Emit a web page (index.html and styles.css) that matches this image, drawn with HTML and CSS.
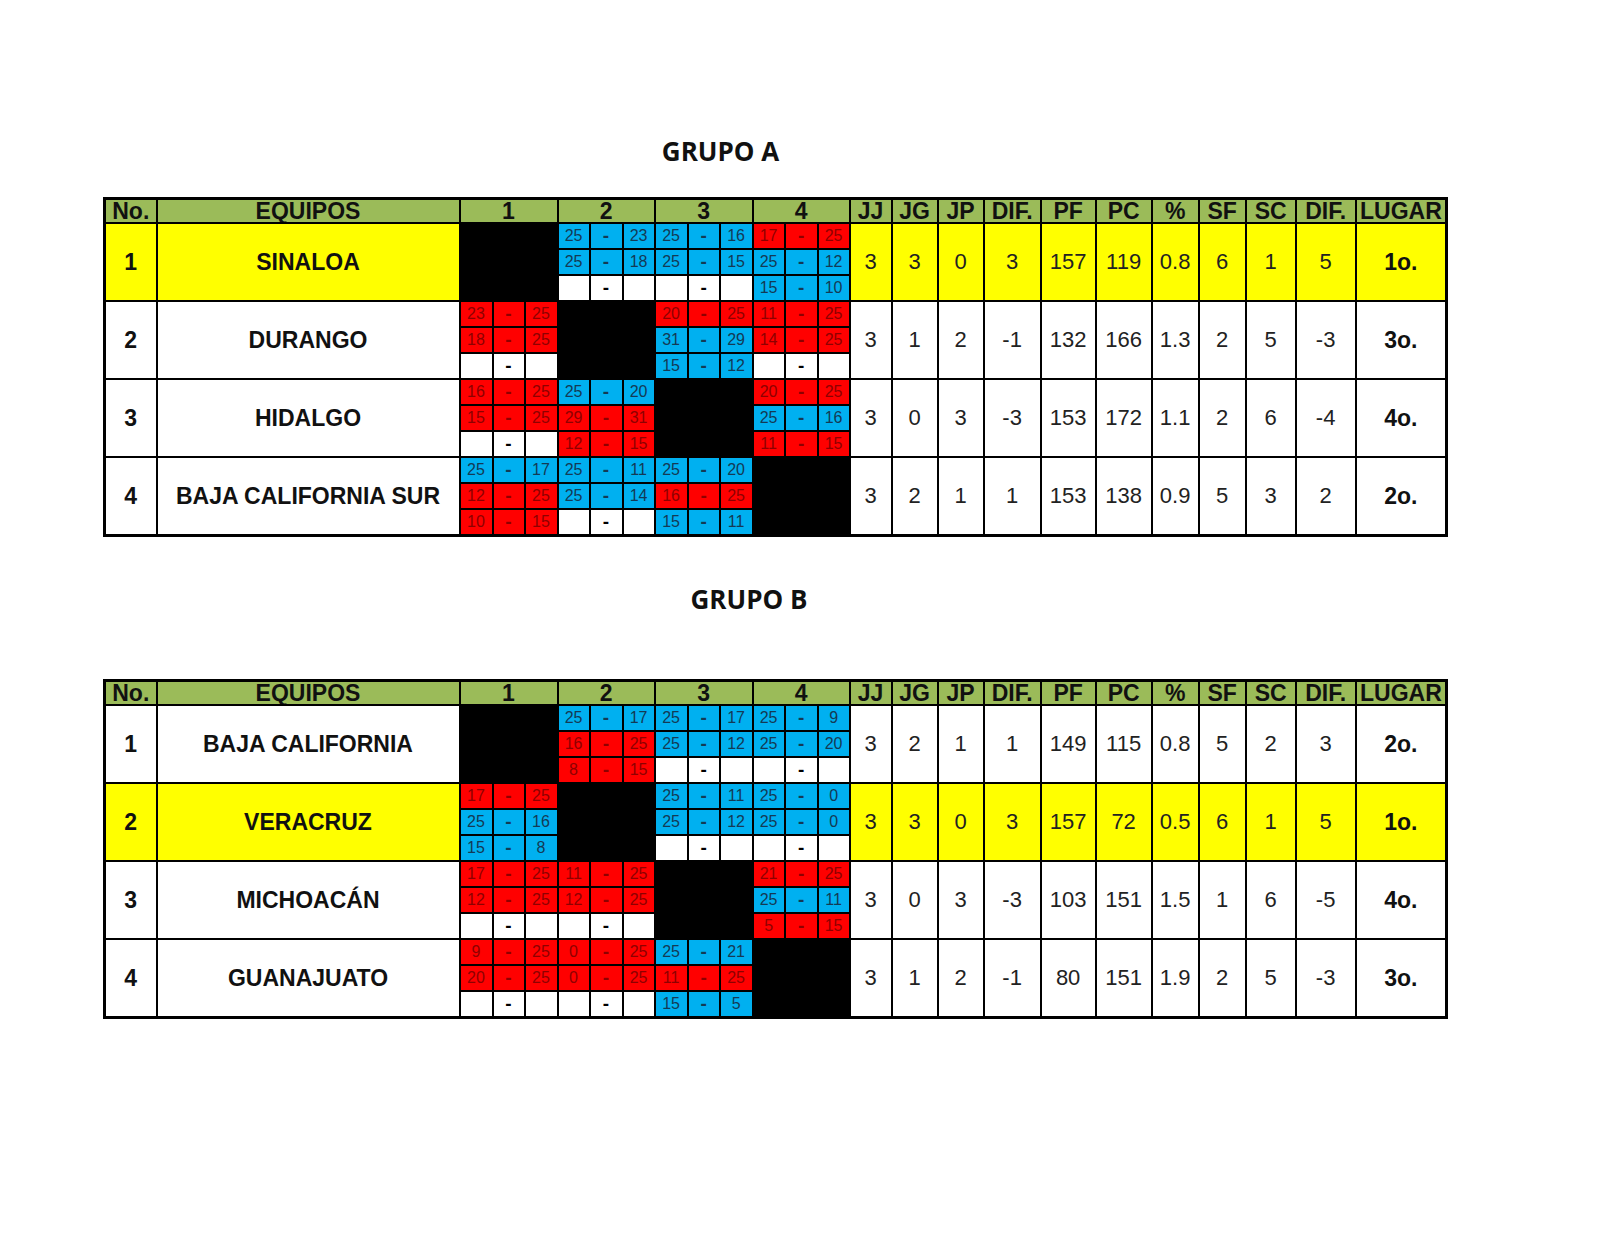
FILE: index.html
```html
<!DOCTYPE html>
<html lang="es">
<head>
<meta charset="utf-8">
<title>Grupos</title>
<link rel="stylesheet" href="styles.css">
</head>
<body>
<div class="page">
  <div class="title title-a">GRUPO A</div>
  <table class="grid">
    <colgroup>
      <col class="c-no"><col class="c-eq">
      <col class="c-s1"><col class="c-s2"><col class="c-s1">
      <col class="c-s2"><col class="c-s1"><col class="c-s2">
      <col class="c-s1"><col class="c-s2"><col class="c-s1">
      <col class="c-s2"><col class="c-s1"><col class="c-s2">
      <col class="c-jj"><col class="c-jg"><col class="c-jp"><col class="c-dif"><col class="c-pf"><col class="c-pc"><col class="c-pct"><col class="c-sf"><col class="c-sc"><col class="c-dif2"><col class="c-lug">
    </colgroup>
    <tr class="head">
      <th>No.</th><th>EQUIPOS</th><th colspan="3">1</th><th colspan="3">2</th><th colspan="3">3</th><th colspan="3">4</th>
      <th>JJ</th><th>JG</th><th>JP</th><th>DIF.</th><th>PF</th><th>PC</th><th>%</th><th>SF</th><th>SC</th><th>DIF.</th><th>LUGAR</th>
    </tr>
    <!-- SINALOA -->
    <tr class="sub">
      <td rowspan="3" class="no hl">1</td><td rowspan="3" class="team hl">SINALOA</td>
      <td rowspan="3" colspan="3" class="x"></td>
      <td class="b">25</td><td class="b d">-</td><td class="b">23</td>
      <td class="b">25</td><td class="b d">-</td><td class="b">16</td>
      <td class="r">17</td><td class="r d">-</td><td class="r">25</td>
      <td rowspan="3" class="st hl">3</td><td rowspan="3" class="st hl">3</td><td rowspan="3" class="st hl">0</td><td rowspan="3" class="st hl">3</td><td rowspan="3" class="st hl">157</td><td rowspan="3" class="st hl">119</td><td rowspan="3" class="st hl">0.8</td><td rowspan="3" class="st hl">6</td><td rowspan="3" class="st hl">1</td><td rowspan="3" class="st hl">5</td><td rowspan="3" class="st lug hl">1o.</td>
    </tr>
    <tr class="sub">
      <td class="b">25</td><td class="b d">-</td><td class="b">18</td>
      <td class="b">25</td><td class="b d">-</td><td class="b">15</td>
      <td class="b">25</td><td class="b d">-</td><td class="b">12</td>
    </tr>
    <tr class="sub">
      <td class="w"></td><td class="w d">-</td><td class="w"></td>
      <td class="w"></td><td class="w d">-</td><td class="w"></td>
      <td class="b">15</td><td class="b d">-</td><td class="b">10</td>
    </tr>
    <!-- DURANGO -->
    <tr class="sub">
      <td rowspan="3" class="no">2</td><td rowspan="3" class="team">DURANGO</td>
      <td class="r">23</td><td class="r d">-</td><td class="r">25</td>
      <td rowspan="3" colspan="3" class="x"></td>
      <td class="r">20</td><td class="r d">-</td><td class="r">25</td>
      <td class="r">11</td><td class="r d">-</td><td class="r">25</td>
      <td rowspan="3" class="st">3</td><td rowspan="3" class="st">1</td><td rowspan="3" class="st">2</td><td rowspan="3" class="st">-1</td><td rowspan="3" class="st">132</td><td rowspan="3" class="st">166</td><td rowspan="3" class="st">1.3</td><td rowspan="3" class="st">2</td><td rowspan="3" class="st">5</td><td rowspan="3" class="st">-3</td><td rowspan="3" class="st lug">3o.</td>
    </tr>
    <tr class="sub">
      <td class="r">18</td><td class="r d">-</td><td class="r">25</td>
      <td class="b">31</td><td class="b d">-</td><td class="b">29</td>
      <td class="r">14</td><td class="r d">-</td><td class="r">25</td>
    </tr>
    <tr class="sub">
      <td class="w"></td><td class="w d">-</td><td class="w"></td>
      <td class="b">15</td><td class="b d">-</td><td class="b">12</td>
      <td class="w"></td><td class="w d">-</td><td class="w"></td>
    </tr>
    <!-- HIDALGO -->
    <tr class="sub">
      <td rowspan="3" class="no">3</td><td rowspan="3" class="team">HIDALGO</td>
      <td class="r">16</td><td class="r d">-</td><td class="r">25</td>
      <td class="b">25</td><td class="b d">-</td><td class="b">20</td>
      <td rowspan="3" colspan="3" class="x"></td>
      <td class="r">20</td><td class="r d">-</td><td class="r">25</td>
      <td rowspan="3" class="st">3</td><td rowspan="3" class="st">0</td><td rowspan="3" class="st">3</td><td rowspan="3" class="st">-3</td><td rowspan="3" class="st">153</td><td rowspan="3" class="st">172</td><td rowspan="3" class="st">1.1</td><td rowspan="3" class="st">2</td><td rowspan="3" class="st">6</td><td rowspan="3" class="st">-4</td><td rowspan="3" class="st lug">4o.</td>
    </tr>
    <tr class="sub">
      <td class="r">15</td><td class="r d">-</td><td class="r">25</td>
      <td class="r">29</td><td class="r d">-</td><td class="r">31</td>
      <td class="b">25</td><td class="b d">-</td><td class="b">16</td>
    </tr>
    <tr class="sub">
      <td class="w"></td><td class="w d">-</td><td class="w"></td>
      <td class="r">12</td><td class="r d">-</td><td class="r">15</td>
      <td class="r">11</td><td class="r d">-</td><td class="r">15</td>
    </tr>
    <!-- BAJA CALIFORNIA SUR -->
    <tr class="sub">
      <td rowspan="3" class="no">4</td><td rowspan="3" class="team">BAJA CALIFORNIA SUR</td>
      <td class="b">25</td><td class="b d">-</td><td class="b">17</td>
      <td class="b">25</td><td class="b d">-</td><td class="b">11</td>
      <td class="b">25</td><td class="b d">-</td><td class="b">20</td>
      <td rowspan="3" colspan="3" class="x"></td>
      <td rowspan="3" class="st">3</td><td rowspan="3" class="st">2</td><td rowspan="3" class="st">1</td><td rowspan="3" class="st">1</td><td rowspan="3" class="st">153</td><td rowspan="3" class="st">138</td><td rowspan="3" class="st">0.9</td><td rowspan="3" class="st">5</td><td rowspan="3" class="st">3</td><td rowspan="3" class="st">2</td><td rowspan="3" class="st lug">2o.</td>
    </tr>
    <tr class="sub">
      <td class="r">12</td><td class="r d">-</td><td class="r">25</td>
      <td class="b">25</td><td class="b d">-</td><td class="b">14</td>
      <td class="r">16</td><td class="r d">-</td><td class="r">25</td>
    </tr>
    <tr class="sub">
      <td class="r">10</td><td class="r d">-</td><td class="r">15</td>
      <td class="w"></td><td class="w d">-</td><td class="w"></td>
      <td class="b">15</td><td class="b d">-</td><td class="b">11</td>
    </tr>
  </table>

  <div class="title title-b">GRUPO B</div>
  <table class="grid">
    <colgroup>
      <col class="c-no"><col class="c-eq">
      <col class="c-s1"><col class="c-s2"><col class="c-s1">
      <col class="c-s2"><col class="c-s1"><col class="c-s2">
      <col class="c-s1"><col class="c-s2"><col class="c-s1">
      <col class="c-s2"><col class="c-s1"><col class="c-s2">
      <col class="c-jj"><col class="c-jg"><col class="c-jp"><col class="c-dif"><col class="c-pf"><col class="c-pc"><col class="c-pct"><col class="c-sf"><col class="c-sc"><col class="c-dif2"><col class="c-lug">
    </colgroup>
    <tr class="head">
      <th>No.</th><th>EQUIPOS</th><th colspan="3">1</th><th colspan="3">2</th><th colspan="3">3</th><th colspan="3">4</th>
      <th>JJ</th><th>JG</th><th>JP</th><th>DIF.</th><th>PF</th><th>PC</th><th>%</th><th>SF</th><th>SC</th><th>DIF.</th><th>LUGAR</th>
    </tr>
    <!-- BAJA CALIFORNIA -->
    <tr class="sub">
      <td rowspan="3" class="no">1</td><td rowspan="3" class="team">BAJA CALIFORNIA</td>
      <td rowspan="3" colspan="3" class="x"></td>
      <td class="b">25</td><td class="b d">-</td><td class="b">17</td>
      <td class="b">25</td><td class="b d">-</td><td class="b">17</td>
      <td class="b">25</td><td class="b d">-</td><td class="b">9</td>
      <td rowspan="3" class="st">3</td><td rowspan="3" class="st">2</td><td rowspan="3" class="st">1</td><td rowspan="3" class="st">1</td><td rowspan="3" class="st">149</td><td rowspan="3" class="st">115</td><td rowspan="3" class="st">0.8</td><td rowspan="3" class="st">5</td><td rowspan="3" class="st">2</td><td rowspan="3" class="st">3</td><td rowspan="3" class="st lug">2o.</td>
    </tr>
    <tr class="sub">
      <td class="r">16</td><td class="r d">-</td><td class="r">25</td>
      <td class="b">25</td><td class="b d">-</td><td class="b">12</td>
      <td class="b">25</td><td class="b d">-</td><td class="b">20</td>
    </tr>
    <tr class="sub">
      <td class="r">8</td><td class="r d">-</td><td class="r">15</td>
      <td class="w"></td><td class="w d">-</td><td class="w"></td>
      <td class="w"></td><td class="w d">-</td><td class="w"></td>
    </tr>
    <!-- VERACRUZ -->
    <tr class="sub">
      <td rowspan="3" class="no hl">2</td><td rowspan="3" class="team hl">VERACRUZ</td>
      <td class="r">17</td><td class="r d">-</td><td class="r">25</td>
      <td rowspan="3" colspan="3" class="x"></td>
      <td class="b">25</td><td class="b d">-</td><td class="b">11</td>
      <td class="b">25</td><td class="b d">-</td><td class="b">0</td>
      <td rowspan="3" class="st hl">3</td><td rowspan="3" class="st hl">3</td><td rowspan="3" class="st hl">0</td><td rowspan="3" class="st hl">3</td><td rowspan="3" class="st hl">157</td><td rowspan="3" class="st hl">72</td><td rowspan="3" class="st hl">0.5</td><td rowspan="3" class="st hl">6</td><td rowspan="3" class="st hl">1</td><td rowspan="3" class="st hl">5</td><td rowspan="3" class="st lug hl">1o.</td>
    </tr>
    <tr class="sub">
      <td class="b">25</td><td class="b d">-</td><td class="b">16</td>
      <td class="b">25</td><td class="b d">-</td><td class="b">12</td>
      <td class="b">25</td><td class="b d">-</td><td class="b">0</td>
    </tr>
    <tr class="sub">
      <td class="b">15</td><td class="b d">-</td><td class="b">8</td>
      <td class="w"></td><td class="w d">-</td><td class="w"></td>
      <td class="w"></td><td class="w d">-</td><td class="w"></td>
    </tr>
    <!-- MICHOACÁN -->
    <tr class="sub">
      <td rowspan="3" class="no">3</td><td rowspan="3" class="team">MICHOACÁN</td>
      <td class="r">17</td><td class="r d">-</td><td class="r">25</td>
      <td class="r">11</td><td class="r d">-</td><td class="r">25</td>
      <td rowspan="3" colspan="3" class="x"></td>
      <td class="r">21</td><td class="r d">-</td><td class="r">25</td>
      <td rowspan="3" class="st">3</td><td rowspan="3" class="st">0</td><td rowspan="3" class="st">3</td><td rowspan="3" class="st">-3</td><td rowspan="3" class="st">103</td><td rowspan="3" class="st">151</td><td rowspan="3" class="st">1.5</td><td rowspan="3" class="st">1</td><td rowspan="3" class="st">6</td><td rowspan="3" class="st">-5</td><td rowspan="3" class="st lug">4o.</td>
    </tr>
    <tr class="sub">
      <td class="r">12</td><td class="r d">-</td><td class="r">25</td>
      <td class="r">12</td><td class="r d">-</td><td class="r">25</td>
      <td class="b">25</td><td class="b d">-</td><td class="b">11</td>
    </tr>
    <tr class="sub">
      <td class="w"></td><td class="w d">-</td><td class="w"></td>
      <td class="w"></td><td class="w d">-</td><td class="w"></td>
      <td class="r">5</td><td class="r d">-</td><td class="r">15</td>
    </tr>
    <!-- GUANAJUATO -->
    <tr class="sub">
      <td rowspan="3" class="no">4</td><td rowspan="3" class="team">GUANAJUATO</td>
      <td class="r">9</td><td class="r d">-</td><td class="r">25</td>
      <td class="r">0</td><td class="r d">-</td><td class="r">25</td>
      <td class="b">25</td><td class="b d">-</td><td class="b">21</td>
      <td rowspan="3" colspan="3" class="x"></td>
      <td rowspan="3" class="st">3</td><td rowspan="3" class="st">1</td><td rowspan="3" class="st">2</td><td rowspan="3" class="st">-1</td><td rowspan="3" class="st">80</td><td rowspan="3" class="st">151</td><td rowspan="3" class="st">1.9</td><td rowspan="3" class="st">2</td><td rowspan="3" class="st">5</td><td rowspan="3" class="st">-3</td><td rowspan="3" class="st lug">3o.</td>
    </tr>
    <tr class="sub">
      <td class="r">20</td><td class="r d">-</td><td class="r">25</td>
      <td class="r">0</td><td class="r d">-</td><td class="r">25</td>
      <td class="r">11</td><td class="r d">-</td><td class="r">25</td>
    </tr>
    <tr class="sub">
      <td class="w"></td><td class="w d">-</td><td class="w"></td>
      <td class="w"></td><td class="w d">-</td><td class="w"></td>
      <td class="b">15</td><td class="b d">-</td><td class="b">5</td>
    </tr>
  </table>
</div>
</body>
</html>
```

FILE: styles.css
```css
html, body {
  margin: 0;
  padding: 0;
  background: #ffffff;
}

body {
  font-family: "Liberation Sans", Arial, sans-serif;
  color: #000;
}

.page {
  padding: 136px 0 0 103px;
}

.title {
  font-family: "Open Sans", "Liberation Sans", sans-serif;
  font-weight: 700;
  font-size: 26px;
  line-height: 30px;
  text-align: center;
  color: #111;
}

.title-a {
  width: 1235px;
  margin-bottom: 31px;
}

.title-b {
  width: 1292px;
  margin-top: 47px;
  margin-bottom: 65px;
}

.grid {
  border-collapse: collapse;
  table-layout: fixed;
  width: 1343px;
  border: 3px solid #000;
}

.c-no { width: 52px; }
.c-eq { width: 303px; }
.c-s1 { width: 33px; }
.c-s2 { width: 32px; }
.c-jj { width: 42px; }
.c-jg { width: 46px; }
.c-jp { width: 46px; }
.c-dif { width: 57px; }
.c-pf { width: 55px; }
.c-pc { width: 56px; }
.c-pct { width: 47px; }
.c-sf { width: 47px; }
.c-sc { width: 50px; }
.c-dif2 { width: 60px; }
.c-lug { width: 91px; }

.grid th,
.grid td {
  border: 2px solid #000;
  padding: 0;
  text-align: center;
  vertical-align: middle;
  overflow: hidden;
  white-space: nowrap;
}

.head th {
  background: #9bbb59;
  font-weight: 700;
  font-size: 23px;
  line-height: 22px;
  height: 22px;
  color: #111;
}

.sub td {
  height: 24px;
  font-size: 16px;
  line-height: 16px;
}

.grid td.no,
.grid td.team {
  font-size: 23px;
  font-weight: 700;
  color: #111;
  background: #fff;
}

.grid td.st {
  font-size: 22px;
  color: #222;
  background: #fff;
}

.grid td.lug {
  font-weight: 700;
  font-size: 23px;
  color: #111;
}

.grid td.hl {
  background: #ffff00;
}

.grid td.x {
  background: #000;
}

.grid td.b {
  background: #00b0f0;
  color: #143a55;
}

.grid td.r {
  background: #ff0000;
  color: #8e0000;
}

.grid td.w {
  background: #fff;
  color: #000;
}

.grid td.d {
  font-weight: 700;
  font-size: 19px;
}
```
